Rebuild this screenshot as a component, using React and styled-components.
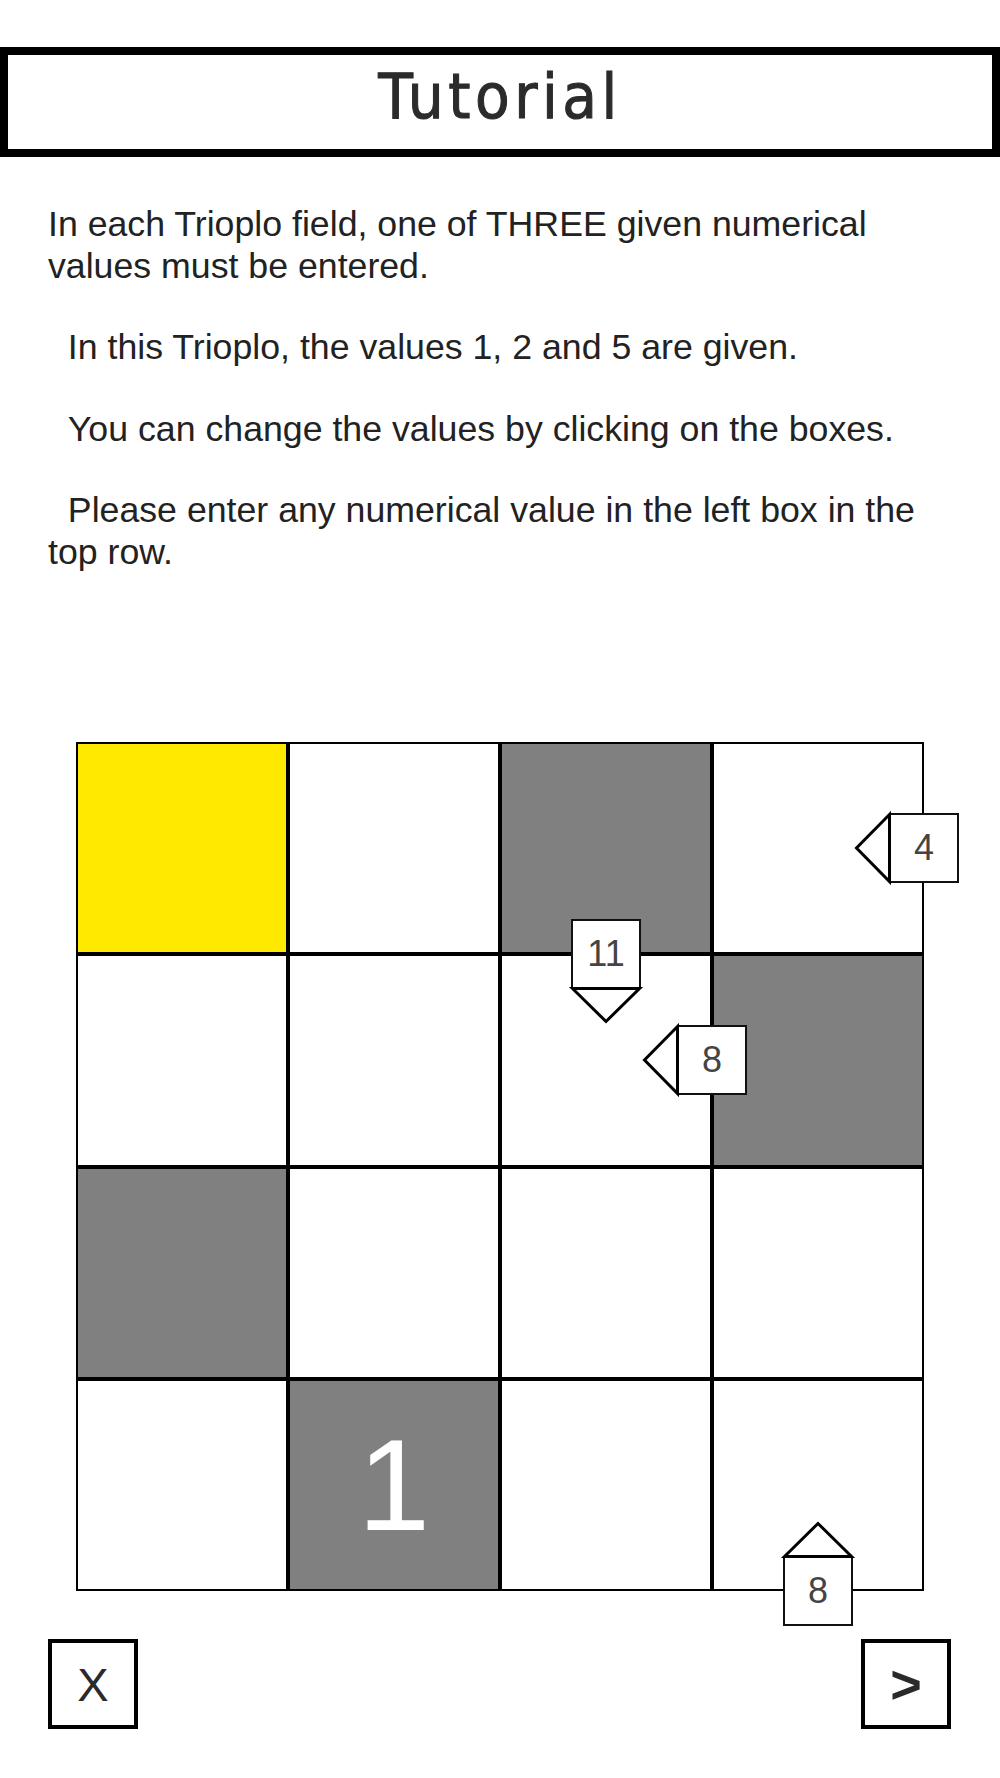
import React from "react";
import styled, { createGlobalStyle, css } from "styled-components";

const GlobalStyle = createGlobalStyle`
  html,
  body {
    margin: 0;
    padding: 0;
    background-color: #fff;
  }

  body {
    font-family: "Liberation Sans", Arial, sans-serif;
    color: #222;
  }
`;

const StyledPage = styled.main`
  width: 1000px;
  min-height: 1778px;
  padding-top: 47px;
  box-sizing: border-box;
`;

const StyledTitleBar = styled.header`
  display: flex;
  align-items: center;
  justify-content: center;
  height: 110px;
  padding-bottom: 12px;
  border: 8px solid #000;
  box-sizing: border-box;
`;

const StyledTitle = styled.h1`
  margin: 0;
  font-family: "DejaVu Sans Condensed", "DejaVu Sans", sans-serif;
  font-stretch: condensed;
  font-weight: 400;
  font-size: 63px;
  line-height: 1;
  letter-spacing: 4.5px;
  color: #2b2b2b;
  -webkit-text-stroke: 1px #2b2b2b;
`;

const StyledIntro = styled.section`
  margin-top: 47px;
  padding: 0 48px;
`;

const StyledParagraph = styled.p`
  margin: 0;
  font-size: 35.7px;
  line-height: 41.5px;
  white-space: pre-wrap;
  color: #222;

  & + & {
    margin-top: 40px;
  }
`;

const StyledBoard = styled.div`
  position: relative;
  display: grid;
  grid-template-columns: repeat(4, 1fr);
  grid-template-rows: repeat(4, 1fr);
  gap: 4px;
  width: 848px;
  height: 849px;
  margin: 169px 0 0 76px;
  padding: 2px;
  box-sizing: border-box;
  background-color: #000;
`;

const cellColors = {
  yellow: "#ffe900",
  gray: "#808080",
  white: "#fff",
};

const StyledCell = styled.div`
  position: relative;
  display: flex;
  align-items: center;
  justify-content: center;
  background-color: ${(props) => cellColors[props.$tone] || "#fff"};
  font-size: 130px;
  line-height: 1;
  color: #fff;
`;

const StyledHint = styled.div`
  position: absolute;
  z-index: 2;
  display: flex;
  align-items: center;
  justify-content: center;
  width: 70px;
  height: 70px;
  border: 2px solid #111;
  box-sizing: border-box;
  background-color: #fff;
  font-size: 36px;
  line-height: 1;
  color: #444;
  transform: translate(-50%, -50%);

  ${(props) =>
    props.$edge === "right" &&
    css`
      top: 50%;
      left: calc(100% + 2px);
    `};
  ${(props) =>
    props.$edge === "top" &&
    css`
      top: -2px;
      left: 50%;
    `};
  ${(props) =>
    props.$edge === "bottom" &&
    css`
      top: calc(100% + 2px);
      left: 50%;
    `};
`;

const StyledArrow = styled.svg`
  position: absolute;
  overflow: visible;

  ${(props) =>
    props.$edge === "right" &&
    css`
      top: -2px;
      right: 100%;
    `};
  ${(props) =>
    props.$edge === "top" &&
    css`
      top: 100%;
      left: -2px;
    `};
  ${(props) =>
    props.$edge === "bottom" &&
    css`
      bottom: 100%;
      left: -2px;
    `};
`;

const StyledFooter = styled.nav`
  display: flex;
  justify-content: space-between;
  margin-top: 48px;
  padding: 0 49px 0 48px;
`;

const StyledNavButton = styled.button`
  display: flex;
  align-items: center;
  justify-content: center;
  width: 90px;
  height: 90px;
  padding: 0;
  border: 4px solid #000;
  box-sizing: border-box;
  background-color: #fff;
  font-family: "Liberation Sans", Arial, sans-serif;
  font-size: ${(props) => (props.$strong ? "54px" : "47px")};
  font-weight: ${(props) => (props.$strong ? 700 : 400)};
  line-height: 1;
  color: #2a2a2a;
  cursor: pointer;
`;

// arrow points back into the cell the clue belongs to
const arrowShapes = {
  right: { width: 36, height: 70, points: "34.5,1.5 1.5,35 34.5,68.5" },
  top: { width: 70, height: 36, points: "1.5,1.5 35,34.5 68.5,1.5" },
  bottom: { width: 70, height: 36, points: "1.5,34.5 35,1.5 68.5,34.5" },
};

const cells = [
  ["yellow", "white", "gray", "white"],
  ["white", "white", "white", "gray"],
  ["gray", "white", "white", "white"],
  ["white", "gray", "white", "white"],
];

const values = { "3-1": "1" };

const hints = [
  { row: 0, col: 3, edge: "right", value: "4" },
  { row: 1, col: 2, edge: "top", value: "11" },
  { row: 1, col: 2, edge: "right", value: "8" },
  { row: 3, col: 3, edge: "bottom", value: "8" },
];

const paragraphs = [
  "In each Trioplo field, one of THREE given numerical values must be entered.",
  "  In this Trioplo, the values 1, 2 and 5 are given.",
  "  You can change the values by clicking on the boxes.",
  "  Please enter any numerical value in the left box in the top row.",
];

const Hint = ({ edge, value }) => {
  const shape = arrowShapes[edge];

  return (
    <StyledHint $edge={edge}>
      <StyledArrow
        $edge={edge}
        width={shape.width}
        height={shape.height}
        viewBox={`0 0 ${shape.width} ${shape.height}`}
      >
        <polygon
          points={shape.points}
          fill="#fff"
          stroke="#000"
          strokeWidth="3"
        />
      </StyledArrow>
      {value}
    </StyledHint>
  );
};

const App = () => {
  return (
    <StyledPage>
      <GlobalStyle />

      <StyledTitleBar>
        <StyledTitle>Tutorial</StyledTitle>
      </StyledTitleBar>

      <StyledIntro>
        {paragraphs.map((text, index) => (
          <StyledParagraph key={index}>{text}</StyledParagraph>
        ))}
      </StyledIntro>

      <StyledBoard>
        {cells.map((row, rowIndex) =>
          row.map((tone, colIndex) => (
            <StyledCell key={`${rowIndex}-${colIndex}`} $tone={tone}>
              {values[`${rowIndex}-${colIndex}`]}
              {hints
                .filter((hint) => hint.row === rowIndex && hint.col === colIndex)
                .map((hint) => (
                  <Hint key={hint.edge} edge={hint.edge} value={hint.value} />
                ))}
            </StyledCell>
          ))
        )}
      </StyledBoard>

      <StyledFooter>
        <StyledNavButton type="button">X</StyledNavButton>
        <StyledNavButton type="button" $strong={true}>
          &gt;
        </StyledNavButton>
      </StyledFooter>
    </StyledPage>
  );
};

export default App;
